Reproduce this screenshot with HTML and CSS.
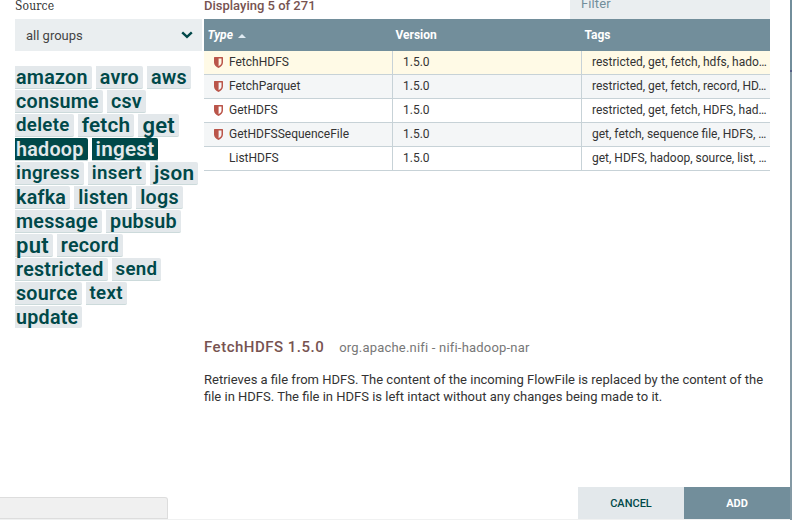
FILE: index.html
```html
<!DOCTYPE html>
<html lang="en">
<head>
<meta charset="utf-8">
<title>Add Processor</title>
<link rel="stylesheet" href="styles.css">
</head>
<body>
<svg class="defs" aria-hidden="true"><symbol id="shield" viewBox="0 0 9 11"><path fill="#ba554a" fill-rule="evenodd" d="M.6 0H8.4Q9 0 9 .6V5.6C9 8 7 9.8 4.5 11C2 9.8 0 8 0 5.6V.6Q0 0 .6 0ZM4.6 1.5V9.2C6.6 8.1 7.5 6.9 7.5 5.5V1.5Z"/></symbol></svg>
<div class="dialog">
  <main class="content">
    <aside class="sidebar">
      <div class="label">Source</div>
      <div class="select"><span>all groups</span><svg width="12" height="8" viewBox="0 0 12 8"><path d="M1.2 1.3 6 5.9 10.8 1.3" fill="none" stroke="#004849" stroke-width="2.4"/></svg></div>
      <ul class="cloud">
        <li class="row"><span class="tag s2">amazon</span><span class="tag s2">avro</span><span class="tag s2">aws</span></li>
        <li class="row"><span class="tag s2">consume</span><span class="tag s2">csv</span></li>
        <li class="row"><span class="tag s1">delete</span><span class="tag s3">fetch</span><span class="tag s4">get</span></li>
        <li class="row"><span class="tag s2 on">hadoop</span><span class="tag s3 on">ingest</span></li>
        <li class="row"><span class="tag s1">ingress</span><span class="tag s1">insert</span><span class="tag s3">json</span></li>
        <li class="row"><span class="tag s2">kafka</span><span class="tag s2">listen</span><span class="tag s2">logs</span></li>
        <li class="row"><span class="tag s2">message</span><span class="tag s2">pubsub</span></li>
        <li class="row"><span class="tag s4">put</span><span class="tag s2">record</span></li>
        <li class="row"><span class="tag s2">restricted</span><span class="tag s1">send</span></li>
        <li class="row"><span class="tag s2">source</span><span class="tag s1">text</span></li>
        <li class="row"><span class="tag s2 last">update</span></li>
      </ul>
    </aside>
    <section class="types">
      <div class="top"><span class="count">Displaying 5 of 271</span><div class="filter">Filter</div></div>
      <div class="grid head"><div class="sorted">Type<i class="arrow"></i></div><div>Version</div><div>Tags</div></div>
      <div class="grid selected"><div><svg class="shield"><use href="#shield"/></svg>FetchHDFS</div><div>1.5.0</div><div><span class="tags">restricted, get, fetch, hdfs, hado…</span></div></div>
      <div class="grid even"><div><svg class="shield"><use href="#shield"/></svg>FetchParquet</div><div>1.5.0</div><div><span class="tags">restricted, get, fetch, record, HD…</span></div></div>
      <div class="grid"><div><svg class="shield"><use href="#shield"/></svg>GetHDFS</div><div>1.5.0</div><div><span class="tags">restricted, get, fetch, HDFS, had…</span></div></div>
      <div class="grid even"><div><svg class="shield"><use href="#shield"/></svg>GetHDFSSequenceFile</div><div>1.5.0</div><div><span class="tags">get, fetch, sequence file, HDFS, …</span></div></div>
      <div class="grid"><div><span class="shield"></span>ListHDFS</div><div>1.5.0</div><div><span class="tags">get, HDFS, hadoop, source, list, …</span></div></div>
      <div class="details">
        <div class="title"><h2>FetchHDFS 1.5.0</h2><span class="bundle">org.apache.nifi - nifi-hadoop-nar</span></div>
        <p>Retrieves a file from HDFS. The content of the incoming FlowFile is replaced by the content of the<br>file in HDFS. The file in HDFS is left intact without any changes being made to it.</p>
      </div>
    </section>
  </main>
  <footer class="footer"><div class="status"></div><div class="buttons"><button class="cancel">CANCEL</button><button class="add">ADD</button></div></footer>
</div>
<div class="canvas-edge"></div>
</body>
</html>
```
FILE: styles.css
```css
* { box-sizing: border-box; }
body { margin: 0; width: 792px; height: 520px; overflow: hidden; display: flex; font-family: Roboto, sans-serif; font-size: 13px; color: #333; background: #fff; }
.defs { position: absolute; width: 0; height: 0; }
.dialog { width: 790px; height: 520px; display: flex; flex-direction: column; border-bottom: 1px solid #f0f1f1; }
.canvas-edge { width: 2px; background: linear-gradient(#728e9b 0 70px, #555f86 70px 72px, #8499a4 72px); }
.content { display: flex; height: 487px; padding-left: 15px; }
.sidebar { width: 187px; margin-right: 2px; flex: none; }
.label { height: 19px; font: 12px/13px "DejaVu Serif Condensed", "DejaVu Serif", serif; letter-spacing: .15px; color: #333; }
.select { height: 32px; background: #eaeef0; display: flex; align-items: center; justify-content: space-between; padding: 0 9px 0 11px; color: #444; }
.cloud { list-style: none; margin: 15px 0 0; padding: 0; }
.row { display: flex; gap: 4px; height: 24px; white-space: nowrap; }
.tag { height: 23px; line-height: 23px; padding: 0 4px; background: #e3e8eb; border-bottom: 1px solid #ccdadb; border-radius: 0 2px 2px 0; font-weight: 600; letter-spacing: .25px; color: #004849; }
.tag:first-child { padding-left: 1px; }
.s1 { font-size: 18.7px; letter-spacing: .3px; }
.s2 { font-size: 19.7px; }
.s3 { font-size: 20.7px; }
.s4 { font-size: 22px; }
.tag.on { background: #004849; color: #e3e8eb; border-color: #ccdadb; }
.tag.last { height: 22px; border-bottom: 0; }
.types { width: 566px; flex: none; }
.top { display: flex; justify-content: space-between; height: 19px; line-height: 12px; }
.count { font-weight: 500; color: #775351; }
.filter { width: 200px; padding-left: 11px; line-height: 8px; background: #eaeef0; color: #728e9b; letter-spacing: .1px; }
.grid { display: grid; grid-template-columns: 189px 189px 188px; height: 24px; line-height: 23px; border-bottom: 1px solid #c7d2d7; font-size: 12px; color: #333; }
.grid > div { padding-left: 10px; display: flex; align-items: center; border-right: 1px solid #c7d2d7; white-space: nowrap; }
.grid > div:last-child { border-right: 0; }
.grid.head { height: 32px; line-height: 32px; background: #728e9b; border: 0; color: #fff; font-weight: 700; }
.grid.head > div { border: 0; padding-left: 2.5px; }
.grid.head .sorted { font-style: italic; padding-left: 3.5px; }
.arrow { margin: 2px 0 0 5px; border: 4px solid transparent; border-top: 0; border-bottom-color: #dfeaf2; }
.selected { background: #fffae6; }
.even { background: #f4f6f7; }
.shield { width: 9px; height: 11px; margin-right: 6px; flex: none; }
.details { margin-top: 167px; }
.title { display: flex; align-items: center; height: 19px; }
h2 { margin: 0 15px 0 0; font-size: 15px; line-height: 19px; font-weight: 500; letter-spacing: .5px; color: #775351; }
.bundle { color: #777; letter-spacing: .2px; }
p { margin: 14px 0 0; line-height: 17px; white-space: nowrap; }
.footer { height: 32px; display: flex; justify-content: space-between; }
.status { width: 168px; height: 22px; align-self: flex-end; background: #f0f0f0; border: solid #ddd; border-width: 1px 1px 1px 0; border-radius: 0 3px 0 0; }
.buttons { display: flex; }
button { width: 106px; border: 0; padding: 0; font: 500 11px Roboto, sans-serif; }
.cancel { background: #e3e8eb; color: #004849; }
.add { background: #728e9b; color: #fff; font-weight: 700; }
```
